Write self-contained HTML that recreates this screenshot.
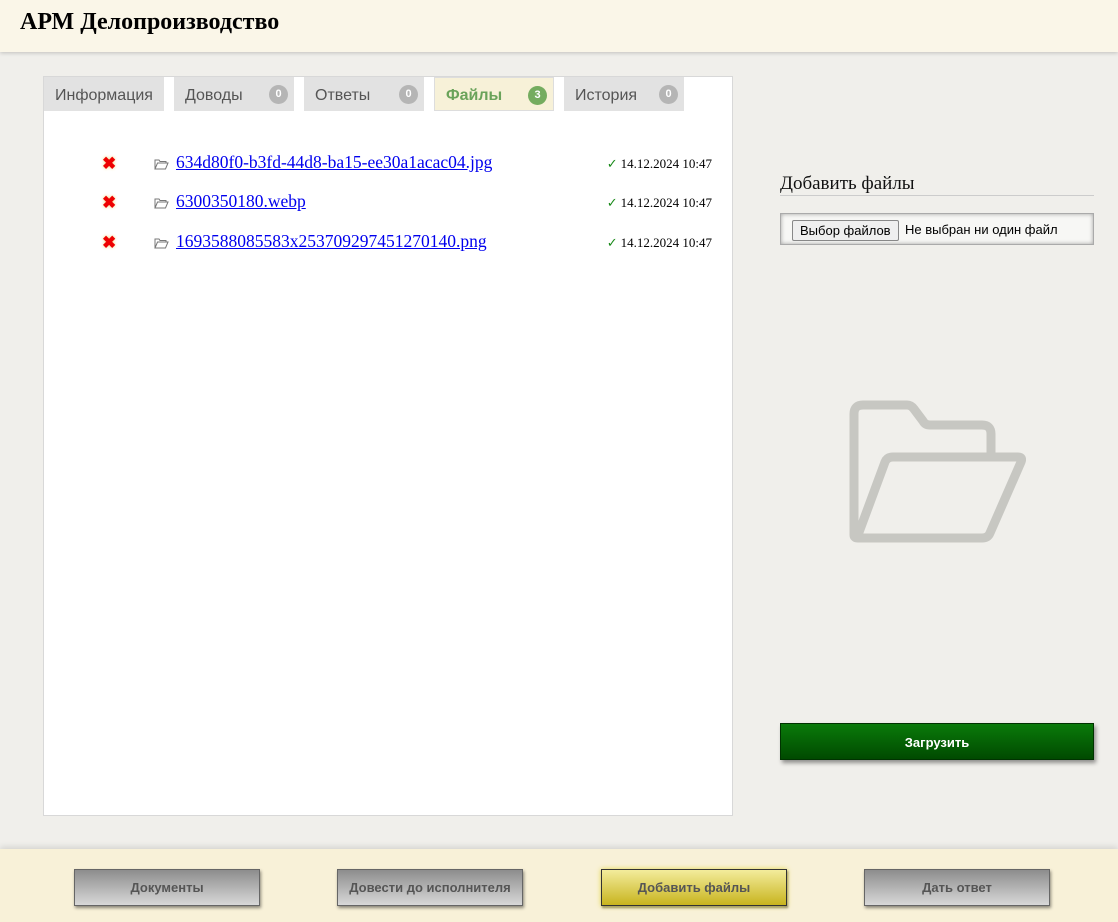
<!DOCTYPE html>
<html><head><meta charset="utf-8"><style>
*{box-sizing:border-box}
body{margin:0;width:1118px;height:922px;overflow:hidden;background:#f0efeb;font-family:"Liberation Sans",sans-serif;position:relative}
.top{position:absolute;left:0;top:0;width:1118px;height:52px;background:#faf6e8;box-shadow:0 1px 4px rgba(0,0,0,.2)}
.top h1{margin:0;position:absolute;left:20px;top:9px;font:bold 24px "Liberation Serif",serif;color:#000}
.panel{position:absolute;left:43px;top:76px;width:690px;height:740px;background:#fff;border:1px solid #d8d8d8}
.tab{position:absolute;top:0;height:34px;background:#e2e2e2;color:#555;font-size:16px;line-height:37px;padding-left:11px}
.tab .b{position:absolute;right:6px;top:8px;width:19px;height:19px;border-radius:50%;background:#b5b5b5;color:#fff;font-size:11px;font-weight:bold;line-height:19px;text-align:center}
.tab.act{background:#f7f1d8;border:1px solid #ddd;color:#6aa35a;font-weight:bold;line-height:35px}
.tab.act .b{background:#74ac5f}
.row{position:absolute;left:0;width:690px;height:24px;font-family:"Liberation Serif",serif}
.x{position:absolute;left:58px;top:2px;color:#e00;font-size:17px;font-weight:bold;text-shadow:0 0 3px #f0d880}
.fold{position:absolute;left:110px;top:6px}
.row a{position:absolute;left:132px;top:0;color:#00e;font-size:17.5px;text-decoration:underline}
.d{position:absolute;right:22px;top:4px;font-size:13px;color:#000}
.d span{color:#1a8a1a;font-family:"DejaVu Sans",sans-serif;font-size:13px;margin-right:3px}
.side h2{position:absolute;left:780px;top:173px;margin:0;font:19px "Liberation Serif",serif;color:#111}
.line{position:absolute;left:780px;top:195px;width:314px;height:1px;background:#ccc}
.fi{position:absolute;left:780px;top:213px;width:314px;height:32px;border:1px solid #aaa;box-shadow:inset 0 0 4px rgba(0,0,0,.35);background:#f7f7f5;font-size:13px}
.fi .btn{position:absolute;left:11px;top:6px;height:21px;padding:0 7px;border:1px solid #888;border-radius:2px;background:#efefef;line-height:19px}
.fi .t{position:absolute;left:124px;top:8px}
.up{position:absolute;left:780px;top:723px;width:314px;height:37px;background:linear-gradient(#0a7a0a,#004a00);border:1px solid #003300;box-shadow:2px 3px 4px rgba(0,0,0,.4);color:#fff;font-size:13px;font-weight:bold;text-align:center;line-height:37px}
.bot{position:absolute;left:0;top:849px;width:1118px;height:73px;background:#f8f1d8;box-shadow:0 -2px 6px rgba(0,0,0,.12)}
.bb{position:absolute;top:869px;width:186px;height:37px;border:1px solid #666;background:linear-gradient(#8d8d8d,#d8d8d8);box-shadow:1px 2px 3px rgba(0,0,0,.45);color:#555;font-size:13px;font-weight:bold;text-align:center;line-height:36px}
.bb.y{background:linear-gradient(#f3ec9c,#c8b41e);border-color:#333;box-shadow:0 0 5px #e6d84a,1px 2px 2px rgba(0,0,0,.5);color:#555}
</style></head><body>
<div class="top"><h1>АРМ Делопроизводство</h1></div>
<div class="panel">
 <div class="tab" style="left:0;width:120px">Информация</div>
 <div class="tab" style="left:130px;width:120px">Доводы<span class="b">0</span></div>
 <div class="tab" style="left:260px;width:120px">Ответы<span class="b">0</span></div>
 <div class="tab act" style="left:390px;width:120px">Файлы<span class="b">3</span></div>
 <div class="tab" style="left:520px;width:120px">История<span class="b">0</span></div>
 <div class="row" style="top:75px"><span class="x">✖</span><svg class="fold" width="15" height="13" viewBox="0 0 15 13"><path d="M1 11V2h4l1 1.5h6V5M1 11l2.5-6H14l-2.5 6z" fill="none" stroke="#777"/></svg><a>634d80f0-b3fd-44d8-ba15-ee30a1acac04.jpg</a><span class="d"><span>✓</span>14.12.2024 10:47</span></div>
 <div class="row" style="top:114px"><span class="x">✖</span><svg class="fold" width="15" height="13" viewBox="0 0 15 13"><path d="M1 11V2h4l1 1.5h6V5M1 11l2.5-6H14l-2.5 6z" fill="none" stroke="#777"/></svg><a>6300350180.webp</a><span class="d"><span>✓</span>14.12.2024 10:47</span></div>
 <div class="row" style="top:154px"><span class="x">✖</span><svg class="fold" width="15" height="13" viewBox="0 0 15 13"><path d="M1 11V2h4l1 1.5h6V5M1 11l2.5-6H14l-2.5 6z" fill="none" stroke="#777"/></svg><a>1693588085583x253709297451270140.png</a><span class="d"><span>✓</span>14.12.2024 10:47</span></div>
</div>
<div class="side"><h2>Добавить файлы</h2></div>
<div class="line"></div>
<div class="fi"><span class="btn">Выбор файлов</span><span class="t">Не выбран ни один файл</span></div>
<svg style="position:absolute;left:848px;top:400px" width="178" height="144" viewBox="0 0 178 144">
<path d="M6 135V14q0-9 9-9h44q4 0 7 4l9 12q2 4 7 4h52q9 0 9 9v26M6 135q0 3 4 3h124q6 0 8-5l31-71q2-5-3-5H45q-6 0-8 5L10 135" fill="none" stroke="#c7c7c2" stroke-width="9" stroke-linejoin="round"/>
</svg>
<div class="up">Загрузить</div>
<div class="bot"></div>
<div class="bb" style="left:74px">Документы</div>
<div class="bb" style="left:337px">Довести до исполнителя</div>
<div class="bb y" style="left:601px">Добавить файлы</div>
<div class="bb" style="left:864px">Дать ответ</div>
</body></html>
